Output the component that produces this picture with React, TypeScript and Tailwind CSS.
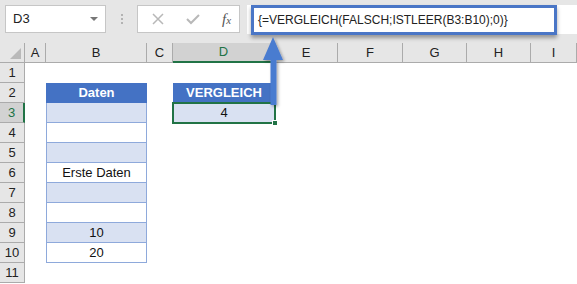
import React from 'react';

const COLS = ['A', 'B', 'C', 'D', 'E', 'F', 'G', 'H', 'I'];

const colWidth: Record<string, string> = {
  A: 'w-[21px]',
  B: 'w-[101px]',
  C: 'w-[26px]',
  D: 'w-[102px]',
  E: 'w-[63px]',
  F: 'w-[65px]',
  G: 'w-[64px]',
  H: 'w-[64px]',
  I: 'w-[46px]',
};

// contents of column B, rows 2..10
const tableB: Record<number, { text?: string; head?: boolean; shade?: boolean }> = {
  2: { text: 'Daten', head: true },
  3: { shade: true },
  4: {},
  5: { shade: true },
  6: { text: 'Erste Daten' },
  7: { shade: true },
  8: {},
  9: { text: '10', shade: true },
  10: { text: '20' },
};

const Toolbar: React.FC = () => (
  <div className="h-[43px] bg-[#e6e6e6] relative">
    <div className="flex items-start pt-[5px] pl-[5px]">
      {/* name box */}
      <div className="w-[101px] h-[28px] bg-white border border-[#c6c6c6] flex items-center justify-between pl-[7px] pr-[7px]">
        <span className="text-[13px] text-[#222]">D3</span>
        <span className="w-0 h-0 border-l-[4px] border-r-[4px] border-t-[4px] border-l-transparent border-r-transparent border-t-[#777]" />
      </div>
      <div className="w-[31px] h-[28px] flex flex-col items-center justify-center gap-[2px]">
        <span className="w-[2px] h-[2px] bg-[#b3b3b3]" />
        <span className="w-[2px] h-[2px] bg-[#b3b3b3]" />
        <span className="w-[2px] h-[2px] bg-[#b3b3b3]" />
      </div>
      {/* cancel / enter / insert function */}
      <div className="w-[103px] h-[28px] bg-white border border-[#c6c6c6] flex items-center">
        <svg width="14" height="14" viewBox="0 0 14 14" className="ml-[13px]">
          <path d="M2 2 L12 12 M12 2 L2 12" stroke="#b8b8b8" strokeWidth="1.5" />
        </svg>
        <svg width="16" height="14" viewBox="0 0 16 14" className="ml-[20px]">
          <path d="M2 7 L6 11 L14 3" stroke="#b8b8b8" strokeWidth="2" fill="none" />
        </svg>
        <span className="ml-[21px] text-[15px] italic text-[#555] font-['Liberation_Serif',serif]">
          f<span className="text-[11px]">x</span>
        </span>
      </div>
      <div className="flex-1 ml-[7px] h-[29px] bg-white" />
    </div>
    {/* highlighted formula */}
    <div className="absolute left-[251px] top-[5px] w-[306px] h-[30px] border-[3px] border-[#4a76c6] bg-white shadow-[0_3px_4px_rgba(0,0,0,0.35)] flex items-center pl-[4px]">
      <span className="text-[12px] text-[#222] whitespace-nowrap">{'{=VERGLEICH(FALSCH;ISTLEER(B3:B10);0)}'}</span>
    </div>
  </div>
);

const HeaderRow: React.FC = () => (
  <div className="flex h-[20px]">
    <div className="w-[25px] bg-[#e6e6e6] border-r border-b border-[#ababab] relative">
      <svg className="absolute right-[3px] bottom-[3px]" width="11" height="11" viewBox="0 0 11 11">
        <path d="M11 0 L11 11 L0 11 Z" fill="#b9b9b9" />
      </svg>
    </div>
    {COLS.map((c) => {
      const sel = c === 'D';
      return (
        <div
          key={c}
          className={`${colWidth[c]} flex items-center justify-center text-[13px] border-r border-[#ababab] ${
            sel ? 'bg-[#d2d2d2] text-[#217346] border-b-2 border-b-[#217346]' : 'bg-[#e6e6e6] text-[#222] border-b border-b-[#ababab]'
          }`}
        >
          {c}
        </div>
      );
    })}
  </div>
);

const Row: React.FC<{ n: number }> = ({ n }) => {
  const sel = n === 3;
  const b = tableB[n];
  return (
    <div className="flex h-[20px]">
      <div
        className={`w-[25px] flex items-center justify-center text-[13px] border-b border-[#ababab] ${
          sel ? 'bg-[#d2d2d2] text-[#217346] border-r-2 border-r-[#217346]' : 'bg-[#e6e6e6] text-[#222] border-r border-r-[#ababab]'
        }`}
      >
        {n}
      </div>
      <div className="w-[21px]" />
      {b ? (
        <div
          className={`w-[101px] flex items-center justify-center text-[13px] border-l border-r border-b border-[#8ea9db] ${
            n === 2 ? 'border-t' : ''
          } ${b.head ? 'bg-[#4472c4] text-white font-bold border-[#4472c4]' : b.shade ? 'bg-[#d9e1f2] text-[#111]' : 'bg-white text-[#111]'}`}
        >
          {b.text}
        </div>
      ) : (
        <div className="w-[101px]" />
      )}
      <div className="w-[26px]" />
      {n === 2 ? (
        <div className="w-[102px] bg-[#4472c4] text-white font-bold text-[13px] flex items-center justify-center">VERGLEICH</div>
      ) : n === 3 ? (
        <div className="w-[102px] bg-[#d9e1f2] text-[#111] text-[13px] flex items-center justify-center relative">
          4
          <span className="absolute -left-[1px] -top-[1px] -right-[1px] -bottom-[1px] border-2 border-[#217346]" />
          <span className="absolute -right-[3px] -bottom-[3px] w-[6px] h-[6px] bg-[#217346] border border-white" />
        </div>
      ) : (
        <div className="w-[102px]" />
      )}
      <div className="flex-1" />
    </div>
  );
};

const Arrow: React.FC = () => (
  <svg className="absolute left-[258px] top-[34px]" width="32" height="76" viewBox="0 0 32 76">
    <defs>
      <filter id="sh" x="-50%" y="-20%" width="200%" height="140%">
        <feDropShadow dx="1.5" dy="1.5" stdDeviation="1.5" floodColor="#000" floodOpacity="0.35" />
      </filter>
    </defs>
    <path d="M15 3 L25 26 L18.5 26 L18.5 71 L12.5 71 L12.5 26 L5 26 Z" fill="#4a7bd0" filter="url(#sh)" />
  </svg>
);

export default function App() {
  return (
    <div className="w-[577px] h-[284px] bg-white overflow-hidden relative font-['Liberation_Sans',Arial,sans-serif]">
      <Toolbar />
      <HeaderRow />
      {Array.from({ length: 11 }, (_, i) => (
        <Row key={i + 1} n={i + 1} />
      ))}
      <Arrow />
    </div>
  );
}
